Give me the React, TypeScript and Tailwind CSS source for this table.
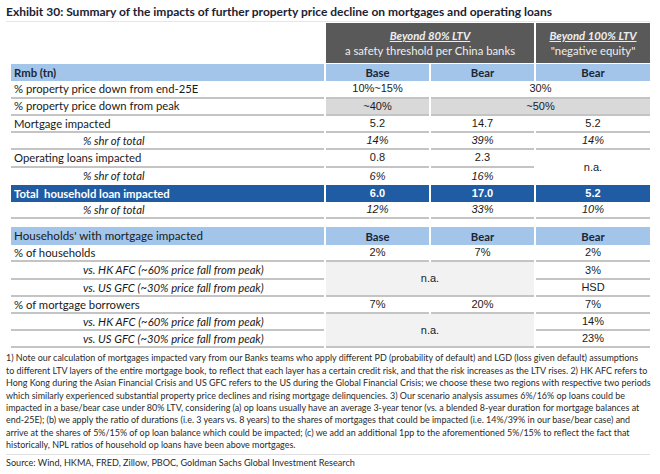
import React from 'react';

const LABEL = "font-['Lato','Noto_Sans',sans-serif] text-[11.3px] text-[#1a1a1a]";
const NUM = "font-['Liberation_Sans','Arial',sans-serif] text-[11px] text-[#1a1a1a]";
const LINE = 'border-b-2 border-[#c4c4c4]';
const BLUE = 'bg-[#a2c5e9]';

type Cell = {
  text?: React.ReactNode;
  kind?: 'label' | 'sub' | 'num' | 'head' | 'total' | 'totalnum';
  span?: string;
  bg?: string;
  line?: boolean;
  italic?: boolean;
};

function C({ text, kind = 'num', span = '', bg = '', line = true, italic = false }: Cell) {
  const base = 'flex items-center min-w-0 whitespace-nowrap leading-none';
  let cls = '';
  if (kind === 'label') cls = `${LABEL} pl-[3px]`;
  else if (kind === 'sub') cls = `${LABEL} italic pl-[72px]`;
  else if (kind === 'head') cls = "font-['Lato',sans-serif] text-[11.3px] font-bold text-[#1c2536] justify-center";
  else if (kind === 'total') cls = "font-['Lato',sans-serif] text-[11.3px] font-bold text-white pl-[3px] bg-[#1f5ca4]";
  else if (kind === 'totalnum') cls = "font-['Liberation_Sans',sans-serif] text-[11px] font-bold text-white justify-center bg-[#1f5ca4]";
  else cls = `${NUM} justify-center`;
  return (
    <div className={`${base} ${cls} ${span} ${bg} ${line ? LINE : ''} ${italic ? 'italic' : ''}`}>{text}</div>
  );
}

const footnote = [
  '1) Note our calculation of mortgages impacted vary from our Banks teams who apply different PD (probability of default) and LGD (loss given default) assumptions',
  'to different LTV layers of the entire mortgage book, to reflect that each layer has a certain credit risk, and that the risk increases as the LTV rises. 2) HK AFC refers to',
  'Hong Kong during the Asian Financial Crisis and US GFC refers to the US during the Global Financial Crisis; we choose these two regions with respective two periods',
  'which similarly experienced substantial property price declines and rising mortgage delinquencies. 3) Our scenario analysis assumes 6%/16% op loans could be',
  'impacted in a base/bear case under 80% LTV, considering (a) op loans usually have an average 3-year tenor (vs. a blended 8-year duration for mortgage balances at',
  'end-25E); (b) we apply the ratio of durations (i.e. 3 years vs. 8 years) to the shares of mortgages that could be impacted (i.e. 14%/39% in our base/bear case) and',
  'arrive at the shares of 5%/15% of op loan balance which could be impacted; (c) we add an additional 1pp to the aforementioned 5%/15% to reflect the fact that',
  'historically, NPL ratios of household op loans have been above mortgages.',
];

export default function App() {
  const grid = 'grid grid-cols-[313px_103px_103px_114px] gap-x-[2px]';
  return (
    <div className="w-[660px] h-[474px] overflow-hidden bg-white pl-[6px] pr-[10px] pt-[4px]">
      <div className="h-[18px] border-b border-[#e6e6e6] font-['Lato',sans-serif] text-[12px] font-bold leading-[16px] text-[#1b2233] whitespace-nowrap">
        Exhibit 30: Summary of the impacts of further property price decline on mortgages and operating loans
      </div>

      <div className="ml-[5px] mt-[1px]">
        {/* scenario header */}
        <div className={`${grid} h-[40px]`}>
          <div />
          <div className="col-span-2 flex flex-col items-center justify-center gap-[4px] bg-[#595959] text-[11.3px] leading-none text-[#eeeeee] font-['Lato',sans-serif]">
            <span className="font-bold italic underline">Beyond 80% LTV</span>
            <span>a safety threshold per China banks</span>
          </div>
          <div className="flex flex-col items-center justify-center gap-[4px] bg-[#595959] text-[11.3px] leading-none text-[#eeeeee] font-['Lato',sans-serif]">
            <span className="font-bold italic underline">Beyond 100% LTV</span>
            <span>"negative equity"</span>
          </div>
        </div>

        {/* loans table */}
        <div className={`${grid} mt-[1px] auto-rows-[17.25px]`}>
          <C kind="head" text="Rmb (tn)" span="!justify-start pl-[3px]" bg={BLUE} line={false} />
          <C kind="head" text="Base" bg={BLUE} line={false} />
          <C kind="head" text="Bear" bg={BLUE} line={false} />
          <C kind="head" text="Bear" bg={BLUE} line={false} />

          <C kind="label" text="% property price down from end-25E" />
          <C text="10%~15%" />
          <C text="30%" span="col-span-2" />

          <C kind="label" text="% property price down from peak" />
          <C text="~40%" bg="bg-[#d9d9d9]" />
          <C text="~50%" span="col-span-2" bg="bg-[#d9d9d9]" />

          <C kind="label" text="Mortgage impacted" />
          <C text="5.2" />
          <C text="14.7" />
          <C text="5.2" />

          <C kind="sub" text="% shr of total" />
          <C text="14%" italic />
          <C text="39%" italic />
          <C text="14%" italic />

          <C kind="label" text="Operating loans impacted" />
          <C text="0.8" />
          <C text="2.3" />
          <C text="n.a." span="row-span-2" line={false} />

          <C kind="sub" text="% shr of total" line={false} />
          <C text="6%" italic line={false} />
          <C text="16%" italic line={false} />

          <C kind="total" text={'Total\u00a0 household loan impacted'} line={false} />
          <C kind="totalnum" text="6.0" line={false} />
          <C kind="totalnum" text="17.0" line={false} />
          <C kind="totalnum" text="5.2" line={false} />

          <C kind="sub" text="% shr of total" />
          <C text="12%" italic />
          <C text="33%" italic />
          <C text="10%" italic />
        </div>

        {/* households table */}
        <div className={`${grid} mt-[8px] grid-rows-[18px] auto-rows-[17.2px]`}>
          <C kind="label" text="Households' with mortgage impacted" span="text-[11.6px]" bg={BLUE} line={false} />
          <C kind="head" text="Base" bg={BLUE} line={false} />
          <C kind="head" text="Bear" bg={BLUE} line={false} />
          <C kind="head" text="Bear" bg={BLUE} line={false} />

          <C kind="label" text="% of households" />
          <C text="2%" />
          <C text="7%" />
          <C text="2%" />

          <C kind="sub" text="vs. HK AFC (~60% price fall from peak)" />
          <C text="n.a." span="col-span-2 row-span-2" bg="bg-[#f2f2f2]" />
          <C text="3%" />
          <C kind="sub" text="vs. US GFC (~30% price fall from peak)" />
          <C text="HSD" />

          <C kind="label" text="% of mortgage borrowers" />
          <C text="7%" />
          <C text="20%" />
          <C text="7%" />

          <C kind="sub" text="vs. HK AFC (~60% price fall from peak)" />
          <C text="n.a." span="col-span-2 row-span-2" bg="bg-[#f2f2f2]" />
          <C text="14%" />
          <C kind="sub" text="vs. US GFC (~30% price fall from peak)" />
          <C text="23%" />
        </div>
      </div>

      <div className="mt-[4px] font-['Lato',sans-serif] text-[8.95px] leading-[12.4px] text-[#2a2a2a]">
        {footnote.map((l, i) => (
          <div key={i} className="whitespace-nowrap">{l}</div>
        ))}
      </div>
      <div className="mt-[2px] border-t border-[#e0e0e0] pt-[2px] font-['Lato',sans-serif] text-[9.1px] leading-[12px] text-[#2a2a2a] whitespace-nowrap">
        Source: Wind, HKMA, FRED, Zillow, PBOC, Goldman Sachs Global Investment Research
      </div>
    </div>
  );
}
